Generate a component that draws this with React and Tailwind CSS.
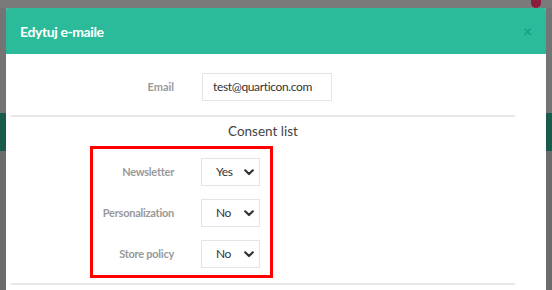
import React from 'react'

const Chevron = () => (
  <svg width="10" height="7" viewBox="0 0 10 7" className="shrink-0">
    <polyline points="1.2,1.3 5,5 8.8,1.3" fill="none" stroke="#333" strokeWidth="2.2" strokeLinecap="round" strokeLinejoin="round" />
  </svg>
)

const SelectBox = ({ value }) => (
  <div className="w-[59px] h-[28px] border border-[#e4e4e4] bg-white flex items-center pl-[14px] pr-[5px] justify-between">
    <span className="text-[12px] text-[#333] tracking-[-0.4px]">{value}</span>
    <Chevron />
  </div>
)

const ConsentRow = ({ label, value }) => (
  <div className="flex items-center">
    <div className="w-[81px] text-right text-[11px] font-bold text-[#999] tracking-[-0.25px] whitespace-nowrap">{label}</div>
    <div className="ml-[27px]">
      <SelectBox value={value} />
    </div>
  </div>
)

export default function App() {
  const consents = [
    { label: 'Newsletter', value: 'Yes' },
    { label: 'Personalization', value: 'No' },
    { label: 'Store policy', value: 'No' },
  ]

  return (
    <div className="relative w-[552px] h-[290px] overflow-hidden bg-[#6e6e6e] font-['Lato',sans-serif]">
      {/* strona pod spodem, przyciemniona */}
      <div className="flex flex-col h-full">
        <div className="h-[8px] bg-[#7a7a7a]" />
        <div className="h-[105px] bg-[#747474]" />
        <div className="h-[38px] bg-[#185b4c]" />
        <div className="flex-1 bg-[#6c6c6c]" />
      </div>
      <div className="absolute right-[11px] top-0 w-[10px] h-[8px] rounded-b-full bg-[#8a1c3c]" />

      {/* modal */}
      <div className="absolute left-[6px] top-[8px] w-[540px] h-[290px] bg-white rounded-t-[3px] overflow-hidden">
        <div className="h-[46px] bg-[#2bbb9b] flex items-center justify-between pl-[14px] pr-[14px]">
          <span className="text-white font-bold text-[14px] tracking-[-0.4px]">Edytuj e-maile</span>
          <span className="text-[#1f9c82] font-bold text-[15px] leading-none">×</span>
        </div>

        <div className="pl-[5px] pr-[31px]">
          <div className="flex items-center pt-[19px]">
            <div className="w-[163px] text-right text-[11px] font-bold text-[#999]">Email</div>
            <div className="ml-[28px] w-[130px] h-[28px] border border-[#e4e4e4] flex items-center pl-[10px] text-[12px] tracking-[-0.35px] text-[#333]">
              test@quarticon.com
            </div>
          </div>

          <div className="mt-[14px] border-t-2 border-[#e8e8e8]" />

          <div className="h-[29px] flex items-center justify-center text-[13.5px] text-[#444]">
            Consent list
          </div>

          <div className="ml-[79px] w-[183px] border-[3px] border-[#ff0000] pt-[9px] pb-[7px] flex flex-col gap-[13px]">
            {consents.map((c) => (
              <ConsentRow key={c.label} label={c.label} value={c.value} />
            ))}
          </div>

          <div className="mt-[5px] border-t-2 border-[#e8e8e8]" />
        </div>
      </div>
    </div>
  )
}
